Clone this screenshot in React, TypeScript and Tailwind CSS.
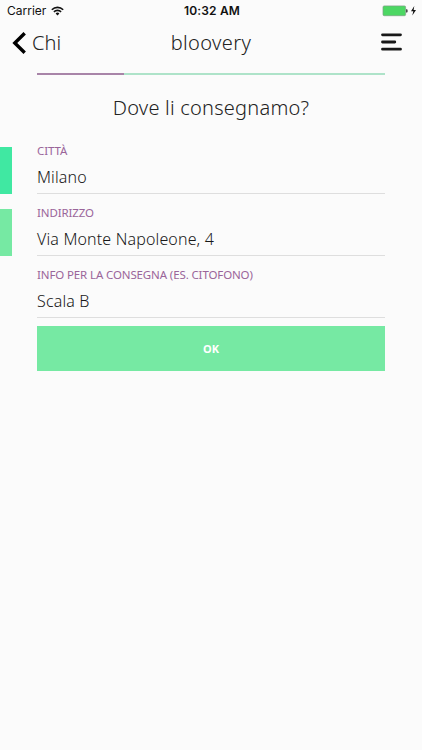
import { clsx } from 'clsx'

const fields = [
  { label: 'CITTÀ', value: 'Milano', marker: 'bg-[#40e8a2]' },
  { label: 'INDIRIZZO', value: 'Via Monte Napoleone, 4', marker: 'bg-[#76e9a3]' },
  { label: 'INFO PER LA CONSEGNA (ES. CITOFONO)', value: 'Scala B', marker: 'bg-transparent' },
]

const WifiIcon = () => (
  <svg viewBox="0 0 13 10" className="h-[10px] w-[13px]" fill="none" stroke="#111" strokeWidth="1.6">
    <path d="M.8 3.7a8.1 8.1 0 0 1 11.4 0" />
    <path d="M2.9 5.9a5.1 5.1 0 0 1 7.2 0" />
    <path d="M6.5 9.4 4.6 7.5a2.7 2.7 0 0 1 3.8 0z" fill="#111" stroke="none" />
  </svg>
)

const BatteryIcon = () => (
  <svg viewBox="0 0 35 12" className="h-[12px] w-[35px]">
    <rect x="1" y=".9" width="22.6" height="9.8" rx="1.2" fill="#4cd763" stroke="#7d9f84" strokeWidth=".7" />
    <path d="M24.2 4.2h.6a.7.7 0 0 1 .7.7v1.9a.7.7 0 0 1-.7.7h-.6z" fill="#222" />
    <path d="M32.3 1 29 6.3h2.3l-1 4.1 3.7-5.3h-2.4z" fill="#111" />
  </svg>
)

const StatusBar = () => (
  <div className="flex h-[22px] items-center justify-between pr-[5px] pl-[7px] font-[Inter,sans-serif] text-[12px] leading-none text-[#111]">
    <div className="flex flex-1 items-center gap-[5px]">
      <span>Carrier</span>
      <WifiIcon />
    </div>
    <span className="text-[12px] font-semibold tracking-[0.15px]">10:32 AM</span>
    <div className="flex flex-1 justify-end">
      <BatteryIcon />
    </div>
  </div>
)

const Header = () => (
  <header className="flex h-[42px] items-center justify-between px-[12px] text-[20px] leading-none font-light text-[#222]">
    <button type="button" className="flex flex-1 items-center gap-[6px]">
      <svg viewBox="0 0 14 22" className="h-[22px] w-[14px]" fill="none" stroke="#000" strokeWidth="3.4">
        <path d="M12.7 1.2 2.8 11l9.9 9.8" />
      </svg>
      <span>Chi</span>
    </button>
    <h1 className="tracking-[0.4px]">bloovery</h1>
    <div className="flex flex-1 justify-end">
      <svg
        viewBox="0 0 21 18"
        className="-mt-[2px] mr-[8px] h-[18px] w-[21px]"
        stroke="#181818"
        strokeWidth="2.8"
        strokeLinecap="round"
      >
        <path d="M1.5 1.8h18M1.5 9h12.3M1.5 16.2h18" />
      </svg>
    </div>
  </header>
)

export default function App() {
  return (
    <div className="min-h-screen bg-[#fbfbfb] font-['Noto_Sans','Open_Sans',sans-serif]">
      <StatusBar />
      <Header />
      <div className="mx-[37px] mt-[9px] flex h-[2px] bg-[#aee3c9]">
        <div className="w-1/4 bg-[#a884a8]" />
      </div>
      <h2 className="flex h-[57px] items-center justify-center pt-[9px] text-[20px] leading-none font-light tracking-[0.23px] text-[#222]">
        Dove li consegnamo?
      </h2>
      <form>
        {fields.map((field) => (
          <div key={field.label} className="flex h-[62px] items-end">
            <div className={clsx('h-[47px] w-[12px]', field.marker)} />
            <label className="mr-[37px] ml-[25px] flex h-[51px] flex-1 flex-col justify-between border-b border-[#dedede] pb-[7px]">
              <span className="text-[11.5px] leading-[16px] tracking-[-0.12px] text-[#9a659a]">{field.label}</span>
              <span className="text-[16px] leading-[18px] font-[350] tracking-[0.15px] text-[#181818]">
                {field.value}
              </span>
            </label>
          </div>
        ))}
        <div className="px-[37px] pt-[8px]">
          <button type="button" className="h-[45px] w-full bg-[#76e9a3] pt-[1px] text-[11px] font-bold text-white">
            OK
          </button>
        </div>
      </form>
    </div>
  )
}
